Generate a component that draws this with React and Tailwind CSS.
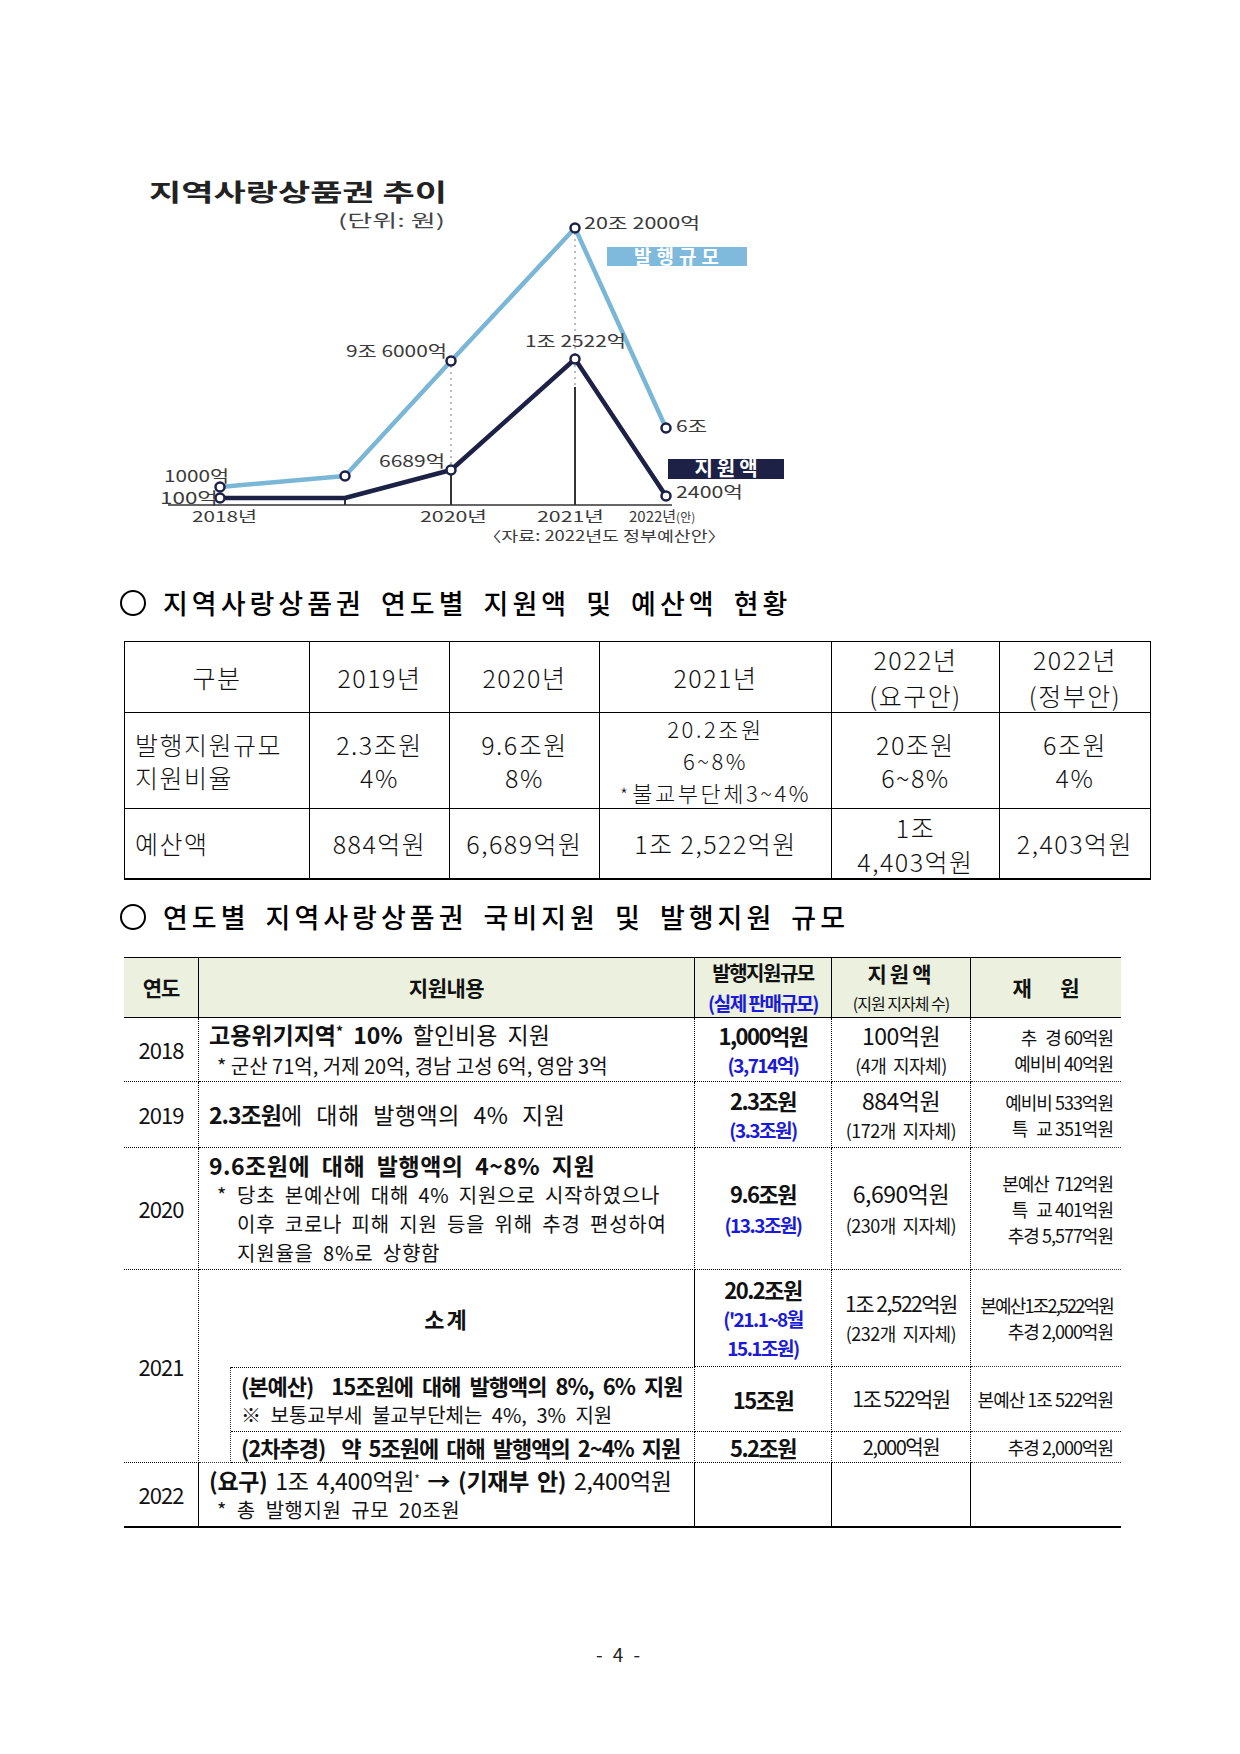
import React from 'react';

const light = [[220, 487], [345, 476], [451, 361], [575, 228], [666, 428]];
const dark = [[220, 498], [345, 498], [451, 470], [575, 359], [666, 496]];

const LIGHT = '#7ab6d6';
const NAVY = '#1c2145';

function TrendChart() {
  const pts = (arr) => arr.map((p) => p.join(',')).join(' ');
  const label = (x, y, t, w, size = 16) => (
    <text x={x} y={y} fontSize={size} fill="#3a3a3a" textLength={w} lengthAdjust="spacingAndGlyphs">
      {t}
    </text>
  );
  return (
    <svg width="680" height="375" viewBox="140 170 680 375" className="ml-[140px] block">
      <text x="149" y="201" fontSize="24" fontWeight="700" fill="#222" textLength="298" lengthAdjust="spacingAndGlyphs">
        지역사랑상품권  추이
      </text>
      <text x="338" y="227" fontSize="17" fill="#444" textLength="107" lengthAdjust="spacingAndGlyphs">
        (단위: 원)
      </text>

      <line x1="168" y1="505" x2="672" y2="505" stroke="#333" strokeWidth="1.5" />
      <line x1="451" y1="366" x2="451" y2="466" stroke="#bdbdbd" strokeWidth="2" strokeDasharray="2 4" />
      <line x1="575" y1="233" x2="575" y2="387" stroke="#bdbdbd" strokeWidth="2" strokeDasharray="2 4" />
      <line x1="345" y1="498" x2="345" y2="505" stroke="#333" strokeWidth="2" />
      <line x1="451" y1="470" x2="451" y2="505" stroke="#333" strokeWidth="2" />
      <line x1="575" y1="387" x2="575" y2="505" stroke="#333" strokeWidth="2" />

      <polyline points={pts(light)} fill="none" stroke={LIGHT} strokeWidth="4.5" strokeLinejoin="round" />
      <polyline points={pts(dark)} fill="none" stroke={NAVY} strokeWidth="4.5" strokeLinejoin="round" />
      {light.map(([x, y]) => (
        <circle key={'l' + x} cx={x} cy={y} r="4.5" fill="#fff" stroke={NAVY} strokeWidth="2.5" />
      ))}
      {dark.filter((p, i) => i !== 1).map(([x, y]) => (
        <circle key={'d' + x} cx={x} cy={y} r="4.5" fill="#fff" stroke={NAVY} strokeWidth="2.5" />
      ))}

      {label(164, 482, '1000억', 65)}
      {label(160, 504, '100억', 58)}
      {label(346, 357, '9조 6000억', 101)}
      {label(379, 467, '6689억', 66)}
      {label(525, 347, '1조 2522억', 101)}
      {label(584, 229, '20조 2000억', 116)}
      {label(676, 432, '6조', 31)}
      {label(676, 498, '2400억', 67)}

      {label(192, 522, '2018년', 65, 15)}
      {label(420, 522, '2020년', 67, 15)}
      {label(537, 522, '2021년', 67, 15)}
      <text x="629" y="522" fontSize="15" fill="#3a3a3a">
        <tspan>2022년</tspan>
        <tspan fontSize="12">(안)</tspan>
      </text>
      {label(483, 541, '〈자료: 2022년도 정부예산안〉', 243, 14)}

      <rect x="607" y="247" width="140" height="19" fill="#7fb9db" />
      <text x="679" y="264" fontSize="19" fontWeight="700" fill="#fff" textAnchor="middle" letterSpacing="5">
        발행규모
      </text>
      <rect x="668" y="459" width="116" height="20" fill={NAVY} />
      <text x="728" y="476" fontSize="20" fontWeight="700" fill="#fff" textAnchor="middle" letterSpacing="4">
        지원액
      </text>
    </svg>
  );
}

function SectionTitle({ children }) {
  return (
    <div className="flex items-center ml-[120px] h-[36px]">
      <span className="w-[26px] h-[26px] rounded-full border-[2px] border-black shrink-0" />
      <span className="ml-[17px] text-[27px] leading-[36px] tracking-[4px] [word-spacing:6px] text-black font-medium whitespace-nowrap">
        {children}
      </span>
    </div>
  );
}

function T1({ children, left, last, extra = '' }) {
  return (
    <div
      className={`flex flex-col justify-center border-r border-black ${last ? 'border-b-2' : 'border-b'} ${
        left ? 'items-start pl-[10px]' : 'items-center text-center'
      } ${extra}`}
    >
      {children}
    </div>
  );
}

function BudgetTable() {
  return (
    <div className="ml-[124px] w-[1027px] grid grid-cols-[185px_140px_150px_232px_168px_151px] grid-rows-[71px_96px_71px] border-l border-t-[1.5px] border-black text-[25px] leading-[33px] tracking-[1.5px] font-light text-[#111]">
      <T1>구분</T1>
      <T1>2019년</T1>
      <T1>2020년</T1>
      <T1>2021년</T1>
      <T1 extra="leading-[36px]">
        <span>2022년</span>
        <span>(요구안)</span>
      </T1>
      <T1 extra="leading-[36px]">
        <span>2022년</span>
        <span>(정부안)</span>
      </T1>

      <T1 left>
        <span>발행지원규모</span>
        <span>지원비율</span>
      </T1>
      <T1>
        <span>2.3조원</span>
        <span>4%</span>
      </T1>
      <T1>
        <span>9.6조원</span>
        <span>8%</span>
      </T1>
      <T1 extra="text-[22px] leading-[32px] tracking-[2.5px]">
        <span>20.2조원</span>
        <span>6~8%</span>
        <span className="tracking-[2.5px]">
          <span className="text-[18px] mr-[2px]">*</span>불교부단체3~4%
        </span>
      </T1>
      <T1>
        <span>20조원</span>
        <span>6~8%</span>
      </T1>
      <T1>
        <span>6조원</span>
        <span>4%</span>
      </T1>

      <T1 left last>예산액</T1>
      <T1 last>884억원</T1>
      <T1 last>6,689억원</T1>
      <T1 last>1조 2,522억원</T1>
      <T1 last extra="leading-[34px]">
        <span>1조</span>
        <span>4,403억원</span>
      </T1>
      <T1 last>2,403억원</T1>
    </div>
  );
}

const dot = 'border-dotted border-[#333]';

function Blue({ children, className = '' }) {
  return <span className={`text-[#1a1ad8] font-bold text-[19px] tracking-[-1.5px] ${className}`}>{children}</span>;
}

function Amount({ children }) {
  return <span className="font-bold text-[22px] tracking-[-1.5px]">{children}</span>;
}

function Sub({ children }) {
  return <span className="text-[18px] tracking-[-0.5px] [word-spacing:3px]">{children}</span>;
}

function Source({ lines }) {
  return (
    <div className="flex flex-col items-end text-[18px] leading-[26px] tracking-[-1px] pr-[8px]">
      {lines.map(([t, cls = '']) => (
        <span key={t} className={`whitespace-pre ${cls}`}>{t}</span>
      ))}
    </div>
  );
}

function SupportTable() {
  const hd = 'bg-[#ebf1de] flex flex-col items-center justify-center border-b border-black font-bold';
  const cell = 'flex flex-col justify-center';
  const center = 'items-center text-center';
  const vr = 'border-r border-black';
  const rowB = `border-b ${dot}`;
  return (
    <div className="ml-[124px] w-[997px] grid grid-cols-[75px_32px_464px_137px_139px_150px] grid-rows-[60px_64px_66px_122px_97px_65px_31px_63px] border-t border-b-2 border-black text-[#111]">
      {/* header */}
      <div className={`${hd} ${vr} col-start-1 row-start-1 text-[21px] tracking-[-1px]`}>연도</div>
      <div className={`${hd} ${vr} col-start-2 col-span-2 row-start-1 text-[21px] tracking-[-0.5px]`}>지원내용</div>
      <div className={`${hd} ${vr} col-start-4 row-start-1 leading-[30px]`}>
        <span className="text-[20px] tracking-[-1.5px]">발행지원규모</span>
        <Blue className="text-[17px]">(실제 판매규모)</Blue>
      </div>
      <div className={`${hd} ${vr} col-start-5 row-start-1 leading-[30px]`}>
        <span className="text-[21px] tracking-[3px]">지원액</span>
        <span className="text-[16px] font-normal tracking-[-1px]">(지원 지자체 수)</span>
      </div>
      <div className={`${hd} col-start-6 row-start-1 text-[21px] whitespace-pre`}>재      원</div>

      {/* 2018 */}
      <div className={`${cell} ${center} ${vr} ${rowB} col-start-1 row-start-2 text-[22px] tracking-[-1px]`}>2018</div>
      <div className={`${cell} ${vr} ${rowB} col-start-2 col-span-2 row-start-2 pl-[10px] leading-[31px]`}>
        <span className="text-[23px] tracking-[0px] [word-spacing:5px] whitespace-pre">
          <b>고용위기지역<sup className="text-[14px]">*</sup> 10%</b> 할인비용 지원
        </span>
        <span className="text-[20px] tracking-[0px] pl-[8px] whitespace-pre">* 군산 71억, 거제 20억, 경남 고성 6억, 영암 3억</span>
      </div>
      <div className={`${cell} ${center} ${vr} ${rowB} col-start-4 row-start-2 leading-[30px]`}>
        <Amount>1,000억원</Amount>
        <Blue>(3,714억)</Blue>
      </div>
      <div className={`${cell} ${center} ${vr} ${rowB} col-start-5 row-start-2 leading-[30px]`}>
        <span className="text-[23px] tracking-[-0.5px]">100억원</span>
        <Sub>(4개 지자체)</Sub>
      </div>
      <div className={`${cell} ${rowB} col-start-6 row-start-2`}>
        <Source lines={[['추   경 60억원'], ['예비비 40억원']]} />
      </div>

      {/* 2019 */}
      <div className={`${cell} ${center} ${vr} ${rowB} col-start-1 row-start-3 text-[22px] tracking-[-1px]`}>2019</div>
      <div className={`${cell} ${vr} ${rowB} col-start-2 col-span-2 row-start-3 pl-[10px]`}>
        <span className="text-[23px] tracking-[0.5px] [word-spacing:8px] whitespace-pre">
          <b className="tracking-[-1px]">2.3조원</b>에 대해 발행액의 4% 지원
        </span>
      </div>
      <div className={`${cell} ${center} ${vr} ${rowB} col-start-4 row-start-3 leading-[30px]`}>
        <Amount>2.3조원</Amount>
        <Blue>(3.3조원)</Blue>
      </div>
      <div className={`${cell} ${center} ${vr} ${rowB} col-start-5 row-start-3 leading-[30px]`}>
        <span className="text-[23px] tracking-[-0.5px]">884억원</span>
        <Sub>(172개 지자체)</Sub>
      </div>
      <div className={`${cell} ${rowB} col-start-6 row-start-3`}>
        <Source lines={[['예비비 533억원'], ['특   교 351억원']]} />
      </div>

      {/* 2020 */}
      <div className={`${cell} ${center} ${vr} ${rowB} col-start-1 row-start-4 text-[22px] tracking-[-1px]`}>2020</div>
      <div className={`${cell} ${vr} ${rowB} col-start-2 col-span-2 row-start-4 pl-[10px] leading-[29px]`}>
        <span className="text-[23px] font-bold tracking-[0.5px] [word-spacing:6px] whitespace-pre">9.6조원에 대해 발행액의 4~8% 지원</span>
        <div className="flex text-[20px] tracking-[0.8px] [word-spacing:4px] pl-[8px]">
          <span className="w-[20px] shrink-0">*</span>
          <div className="flex flex-col">
            <span className="whitespace-pre">당초 본예산에 대해 4% 지원으로 시작하였으나</span>
            <span className="whitespace-pre">이후 코로나 피해 지원 등을 위해 추경 편성하여</span>
            <span className="whitespace-pre">지원율을 8%로 상향함</span>
          </div>
        </div>
      </div>
      <div className={`${cell} ${center} ${vr} ${rowB} col-start-4 row-start-4 leading-[32px]`}>
        <Amount>9.6조원</Amount>
        <Blue>(13.3조원)</Blue>
      </div>
      <div className={`${cell} ${center} ${vr} ${rowB} col-start-5 row-start-4 leading-[32px]`}>
        <span className="text-[23px] tracking-[-0.5px]">6,690억원</span>
        <Sub>(230개 지자체)</Sub>
      </div>
      <div className={`${cell} ${rowB} col-start-6 row-start-4`}>
        <Source lines={[['본예산  712억원'], ['특   교 401억원'], ['추경 5,577억원']]} />
      </div>

      {/* 2021 */}
      <div className={`${cell} ${center} ${vr} ${rowB} col-start-1 row-start-5 row-span-3 text-[22px] tracking-[-1px]`}>2021</div>
      <div className={`${cell} ${center} ${vr} col-start-2 col-span-2 row-start-5 text-[22px] font-bold tracking-[2px]`}>소계</div>
      <div className={`${cell} ${center} ${vr} ${rowB} col-start-4 row-start-5 leading-[29px]`}>
        <Amount>20.2조원</Amount>
        <Blue>('21.1~8월</Blue>
        <Blue>15.1조원)</Blue>
      </div>
      <div className={`${cell} ${center} ${vr} ${rowB} col-start-5 row-start-5 leading-[30px]`}>
        <span className="text-[21px] tracking-[-1.5px]">1조 2,522억원</span>
        <Sub>(232개 지자체)</Sub>
      </div>
      <div className={`${cell} ${rowB} col-start-6 row-start-5`}>
        <Source lines={[['본예산1조2,522억원', 'tracking-[-1.8px]'], ['추경 2,000억원']]} />
      </div>

      <div className={`border-r ${dot} ${rowB} col-start-2 row-start-6 row-span-2`} />
      <div className={`${cell} ${vr} border-t ${rowB} col-start-3 row-start-6 pl-[10px] leading-[30px]`}>
        <span className="text-[22px] font-bold tracking-[-1px] [word-spacing:5px] whitespace-pre">(본예산)  15조원에 대해 발행액의 8%, 6% 지원</span>
        <span className="text-[20px] tracking-[0px] [word-spacing:5px] whitespace-pre">※ 보통교부세 불교부단체는 4%, 3% 지원</span>
      </div>
      <div className={`${cell} ${center} ${vr} ${rowB} col-start-4 row-start-6`}>
        <Amount>15조원</Amount>
      </div>
      <div className={`${cell} ${center} ${vr} ${rowB} col-start-5 row-start-6`}>
        <span className="text-[21px] tracking-[-1.5px]">1조 522억원</span>
      </div>
      <div className={`${cell} ${rowB} col-start-6 row-start-6`}>
        <Source lines={[['본예산 1조 522억원']]} />
      </div>

      <div className={`${cell} ${vr} ${rowB} col-start-3 row-start-7 pl-[10px]`}>
        <span className="text-[22px] font-bold tracking-[-1px] [word-spacing:4px] whitespace-pre">(2차추경)  약 5조원에 대해 발행액의 2~4% 지원</span>
      </div>
      <div className={`${cell} ${center} ${vr} ${rowB} col-start-4 row-start-7`}>
        <Amount>5.2조원</Amount>
      </div>
      <div className={`${cell} ${center} ${vr} ${rowB} col-start-5 row-start-7`}>
        <span className="text-[20px] tracking-[-1.5px]">2,000억원</span>
      </div>
      <div className={`${cell} ${rowB} col-start-6 row-start-7`}>
        <Source lines={[['추경 2,000억원']]} />
      </div>

      {/* 2022 */}
      <div className={`${cell} ${center} ${vr} col-start-1 row-start-8 text-[22px] tracking-[-1px]`}>2022</div>
      <div className={`${cell} ${vr} col-start-2 col-span-2 row-start-8 pl-[10px] leading-[29px]`}>
        <span className="text-[23px] tracking-[-0.3px] [word-spacing:3px] whitespace-pre">
          <b>(요구)</b> 1조 4,400억원<sup className="text-[12px]">*</sup> <b>→ (기재부 안)</b> 2,400억원
        </span>
        <span className="text-[20px] tracking-[0.5px] [word-spacing:5px] pl-[8px] whitespace-pre">* 총 발행지원 규모 20조원</span>
      </div>
      <div className={`${vr} col-start-4 row-start-8`} />
      <div className={`${vr} col-start-5 row-start-8`} />
      <div className="col-start-6 row-start-8" />
    </div>
  );
}

export default function App() {
  return (
    <div className="w-[1240px] h-[1754px] bg-white font-['Noto_Sans_CJK_KR','Noto_Sans',sans-serif] text-black">
      <div className="pt-[170px]">
        <TrendChart />
      </div>
      <div className="mt-[40px]">
        <SectionTitle>지역사랑상품권 연도별 지원액 및 예산액 현황</SectionTitle>
      </div>
      <div className="mt-[20px]">
        <BudgetTable />
      </div>
      <div className="mt-[19px]">
        <SectionTitle>연도별 지역사랑상품권 국비지원 및 발행지원 규모</SectionTitle>
      </div>
      <div className="mt-[22px]">
        <SupportTable />
      </div>
      <div className="mt-[114px] text-center text-[19px] leading-[24px] text-[#222] [word-spacing:6px] pr-[4px]">- 4 -</div>
    </div>
  );
}
